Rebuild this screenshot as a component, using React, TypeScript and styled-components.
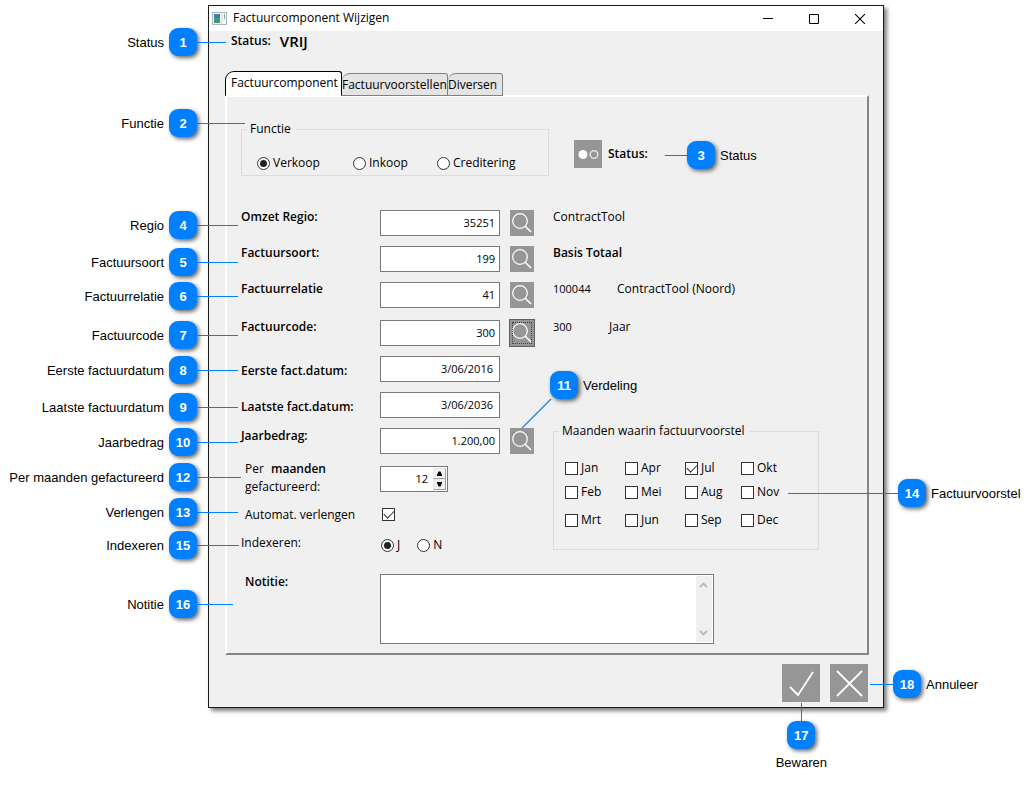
import React, { useState } from "react";
import styled, { createGlobalStyle, css } from "styled-components";

const BLUE = "#0080ff";
const FACE = "#f0f0f0";
const UI_FONT = '"Open Sans", "Noto Sans", sans-serif';

const GlobalStyle = createGlobalStyle`
  * { box-sizing: border-box; }
  body {
    margin: 0;
    background: #fff;
    color: #000;
    font: 12px/16px ${UI_FONT};
  }
  button, input, textarea { font: inherit; color: inherit; margin: 0; }
`;

const Stage = styled.main`
  padding: 5px 151px 78px 208px;
`;

const Frame = styled.section`
  position: relative;
  min-width: 640px;
  background: ${FACE};
  border: 1px solid #1a1a1a;
  box-shadow: 3px 3px 4px rgba(0, 0, 0, 0.5);
`;

/* Title bar */

const TitleBar = styled.header`
  display: flex;
  align-items: center;
  height: 25px;
  padding-left: 3px;
  background: #fff;
`;

const Title = styled.h1`
  flex: 1;
  margin: 0 0 0 6px;
  padding-bottom: 2px;
  font-size: 12px;
  line-height: 16px;
  font-weight: 400;
`;

const CaptionButton = styled.button`
  display: flex;
  align-items: center;
  justify-content: center;
  width: 46px;
  height: 25px;
  padding: 0;
  border: 0;
  background: none;
`;

/* Client area */

const Body = styled.div`
  padding: 0 14px 5px 16px;
`;

const StatusLine = styled.div`
  display: flex;
  align-items: center;
  gap: 9px;
  height: 20px;
  padding-left: 6px;
  font-weight: 600;
`;

const StatusValue = styled.strong`
  font-size: 15px;
  line-height: 20px;
  font-weight: 600;
`;

const Tabs = styled.div`
  display: flex;
  align-items: flex-end;
  height: 25px;
  margin-top: 20px;
`;

const Tab = styled.button<{ $active: boolean; $width: number }>`
  width: ${(p) => p.$width}px;
  height: 23px;
  padding: 0;
  border: 1px solid #808080;
  border-left-width: 0;
  border-radius: 8px 3px 0 0;
  background: #e4e4e4;
  text-align: left;
  white-space: nowrap;
  & + &:last-child { padding-left: 2px; }
  ${(p) =>
    p.$active &&
    css`
      height: 25px;
      padding: 0 0 2px 5px;
      border: 1px solid #000;
      border-bottom-color: #fff;
      border-radius: 9px 3px 0 0;
      background: #fff;
    `}
`;

const Panel = styled.div`
  padding: 24px 14px 9px;
  margin-top: -1px;
  border: 2px solid;
  border-color: #fff #868686 #868686 #fff;
`;

const TopSection = styled.div`
  display: flex;
  align-items: flex-start;
  gap: 25px;
  margin-bottom: 33px;
`;

const Group = styled.fieldset`
  margin: 0;
  min-width: 0;
  border: 1px solid #dcdcdc;
  padding: 0 11px;
  flex: none;
`;

const FunctionGroup = styled(Group)`
  width: 308px;
  height: 55px;
  padding: 18px 15px 0;
`;

const MonthGroup = styled(Group)`
  width: 266px;
  height: 127px;
  margin-top: 67px;
  padding: 21px 11px 0;
`;

const Legend = styled.legend<{ $pull?: boolean }>`
  padding: 0 5px 0 3px;
  margin-left: ${(p) => (p.$pull ? "-10px" : "-6px")};
`;

const Choice = styled.label`
  display: flex;
  align-items: center;
  gap: 3px;
  height: 16px;
`;

const ChoiceRow = styled.div<{ $columns: string }>`
  display: grid;
  grid-template-columns: ${(p) => p.$columns};
`;

const Radio = styled.input.attrs({ type: "radio" })`
  appearance: none;
  flex: none;
  display: grid;
  place-items: center;
  width: 13px;
  height: 13px;
  border: 1px solid #333;
  border-radius: 50%;
  background: #fff;
  &:checked::before {
    content: "";
    width: 7px;
    height: 7px;
    border-radius: 50%;
    background: #222;
  }
`;

const Check = styled.input.attrs({ type: "checkbox" })`
  appearance: none;
  flex: none;
  display: block;
  width: 13px;
  height: 13px;
  border: 1px solid #333;
  background: #fff;
  &:checked::before {
    content: "";
    display: block;
    width: 9px;
    height: 5px;
    margin: 1px 0 0 1px;
    border: solid #333;
    border-width: 0 0 1px 1px;
    transform: rotate(-45deg);
  }
`;

const MonthGrid = styled.div`
  display: grid;
  grid-template-columns: 60px 60px 56px 56px;
  grid-template-rows: 24px 28px 16px;
`;

const StatusPicker = styled.div`
  display: flex;
  align-items: center;
  gap: 6px;
  margin-top: 19px;
  font-weight: 600;
`;

const IconButton = styled.button<{ $w: number; $h: number; $focus?: boolean }>`
  display: flex;
  align-items: center;
  justify-content: center;
  flex: none;
  width: ${(p) => p.$w}px;
  height: ${(p) => p.$h}px;
  padding: 0;
  border: 0;
  background: #969696;
  ${(p) =>
    p.$focus &&
    css`
      outline: 1px solid #606060;
    `}
`;

/* Form rows */

const Row = styled.div<{ $gap?: number }>`
  display: flex;
  align-items: flex-start;
  min-height: 26px;
  margin-bottom: ${(p) => p.$gap ?? 10}px;
`;

/* Rows whose captions stand a pixel above their field */
const Fields = styled.div`
  & input, & button { margin-top: 1px; }
`;

const Label = styled.label<{ $bold?: boolean; $indent?: boolean; $low?: boolean }>`
  flex: none;
  width: 139px;
  padding-left: ${(p) => (p.$indent ? 4 : 0)}px;
  padding-top: ${(p) => (p.$low ? 7 : 0)}px;
  font-weight: ${(p) => (p.$bold ? 600 : 400)};
  white-space: nowrap;
`;

const Field = styled.input<{ $date?: boolean }>`
  width: 120px;
  height: 26px;
  padding: 0 ${(p) => (p.$date ? 6 : 4)}px 2px 4px;
  margin-right: 10px;
  border: 1px solid #7a7a7a;
  border-radius: 0;
  background: #fff;
  font-size: 11px;
  text-align: right;
`;

const Info = styled.output<{ $bold?: boolean }>`
  margin-left: 19px;
  font-weight: ${(p) => (p.$bold ? 600 : 400)};
  white-space: nowrap;
`;

const InfoCode = styled.span<{ $width: number }>`
  display: inline-block;
  width: ${(p) => p.$width}px;
  font-size: 11px;
`;

const Lower = styled.div`
  display: flex;
  align-items: flex-start;
`;

const LowerForm = styled.div`
  flex: none;
  width: 312px;
`;

const SpinRow = styled.div`
  display: flex;
  height: 38px;
  margin: -4px 0 9px;
`;

const SpinLabel = styled(Label)`
  line-height: 18px;
  b { margin-left: 4px; font-weight: 600; }
`;

const Spinner = styled.div`
  display: flex;
  align-self: center;
  width: 68px;
  height: 26px;
  padding: 1px;
  border: 1px solid #7a7a7a;
  background: #fff;
`;

const SpinInput = styled.input`
  flex: 1;
  min-width: 0;
  padding: 0 5px 0 0;
  border: 0;
  background: none;
  font-size: 11px;
  text-align: right;
`;

const SpinButtons = styled.div`
  display: flex;
  flex-direction: column;
  width: 13px;
`;

const SpinButton = styled.button`
  display: flex;
  align-items: center;
  justify-content: center;
  flex: 1;
  padding: 0;
  border: 1px solid;
  border-color: #e8e8e8 #a0a0a0 #a0a0a0 #e8e8e8;
  background: ${FACE};
`;

const ShortRow = styled.div<{ $height: number; $gap: number }>`
  display: flex;
  align-items: flex-start;
  height: ${(p) => p.$height}px;
  margin-bottom: ${(p) => p.$gap}px;
`;

const CheckCell = styled.div`
  padding: 1px 2px;
`;

const IndexChoices = styled.div`
  display: flex;
  align-self: flex-end;
  gap: 17px;
  padding-left: 1px;
`;

const NoteBox = styled.div`
  display: flex;
  width: 334px;
  height: 70px;
  padding: 1px;
  border: 1px solid #7a7a7a;
  background: #fff;
`;

const NoteText = styled.textarea`
  flex: 1;
  padding: 2px 4px;
  border: 0;
  resize: none;
  overflow: hidden;
  background: #fff;
`;

const NoteScroll = styled.div`
  display: flex;
  flex-direction: column;
  align-items: center;
  justify-content: space-between;
  width: 16px;
  padding: 6px 2px 6px 0;
  background: ${FACE};
`;

const Footer = styled.footer`
  display: flex;
  justify-content: flex-end;
  gap: 10px;
  padding: 9px 1px 0 0;
`;

/* Numbered callouts that lie over the window */

type Place = { $top: number; $left?: string; $right?: string };

const CalloutBox = styled.div<Place & { $vertical?: boolean }>`
  position: absolute;
  top: ${(p) => p.$top}px;
  left: ${(p) => p.$left ?? "auto"};
  right: ${(p) => p.$right ?? "auto"};
  display: flex;
  flex-direction: ${(p) => (p.$vertical ? "column" : "row")};
  align-items: center;
  font: 13px/16px "Liberation Sans", Arial, sans-serif;
  white-space: nowrap;
  pointer-events: none;
`;

const Badge = styled.span`
  display: flex;
  align-items: center;
  justify-content: center;
  flex: none;
  width: 28px;
  height: 28px;
  padding-top: 1px;
  border-radius: 9px;
  background: ${BLUE};
  color: #fff;
  font-weight: 700;
  box-shadow: 2px 2px 4px rgba(0, 0, 0, 0.6);
`;

const Lead = styled.span<{ $length?: number }>`
  flex: ${(p) => (p.$length ? "none" : "1")};
  width: ${(p) => (p.$length ? `${p.$length}px` : "auto")};
  height: 1px;
  background: ${BLUE};
`;

const VerticalLead = styled.span`
  width: 1px;
  height: 18px;
  background: ${BLUE};
`;

const Caption = styled.span<{ $width?: number }>`
  margin: 0 5px;
  padding-top: 2px;
  min-width: ${(p) => (p.$width ? `${p.$width}px` : "0")};
`;

const BottomCaption = styled.span`
  margin-top: 6px;
`;

const DiagonalLead = styled.svg`
  position: absolute;
  top: 393px;
  left: 313px;
`;

const SearchIcon = () => (
  <svg width="24" height="26" viewBox="0 0 24 26" fill="none" stroke="#fff" aria-hidden="true">
    <circle cx="10" cy="11" r="7.3" strokeWidth="1.2" />
    <path d="M15.2 16.2L21 22" strokeWidth="1.6" />
  </svg>
);

const FocusMark = styled.svg`
  outline: 1px dotted #444;
  outline-offset: -3px;
`;

const FocusedSearchIcon = () => (
  <FocusMark width="24" height="26" viewBox="0 0 24 26" fill="none" stroke="#fff" aria-hidden="true">
    <circle cx="10" cy="11" r="7.3" strokeWidth="1.2" />
    <path d="M15.2 16.2L21 22" strokeWidth="1.6" />
  </FocusMark>
);

const Arrow = ({ down }: { down?: boolean }) => (
  <svg width="7" height="5" viewBox="0 0 7 5" aria-hidden="true">
    <path d={down ? "M1 0h5v1L4.500 4.500h-2L1 1z" : "M1 5h5V4L4.500 .5h-2L1 4z"} fill="#000" />
  </svg>
);

const Chevron = ({ down }: { down?: boolean }) => (
  <svg width="9" height="6" viewBox="0 0 9 6" fill="none" stroke="#b8b8b8" strokeWidth="1.8" aria-hidden="true">
    <path d={down ? "M1 1l3.500 3.500L8 1" : "M1 5l3.500-3.500L8 5"} />
  </svg>
);

const tabs = [
  { name: "Factuurcomponent", width: 117 },
  { name: "Factuurvoorstellen", width: 106 },
  { name: "Diversen", width: 55 },
];

const months = ["Jan", "Apr", "Jul", "Okt", "Feb", "Mei", "Aug", "Nov", "Mrt", "Jun", "Sep", "Dec"];

const lookups = [
  { id: "regio", label: "Omzet Regio:", value: "35251", gap: 9, name: "ContractTool" },
  { id: "soort", label: "Factuursoort:", value: "199", gap: 9, name: "Basis Totaal", bold: true },
  { id: "relatie", label: "Factuurrelatie", value: "41", gap: 11, code: "100044", codeWidth: 64, name: "ContractTool (Noord)" },
  { id: "code", label: "Factuurcode:", value: "300", gap: 10, code: "300", codeWidth: 56, name: "Jaar", focus: true },
];

/* y is the height of the lead line in the window, end where it stops */
const leftCallouts = [
  { n: 1, text: "Status", y: 36, end: 17 },
  { n: 2, text: "Functie", y: 117, end: 36 },
  { n: 4, text: "Regio", y: 219, end: 29 },
  { n: 5, text: "Factuursoort", y: 256, end: 29 },
  { n: 6, text: "Factuurrelatie", y: 290, end: 29 },
  { n: 7, text: "Factuurcode", y: 329, end: 29 },
  { n: 8, text: "Eerste factuurdatum", y: 364, end: 29 },
  { n: 9, text: "Laatste factuurdatum", y: 401, end: 29 },
  { n: 10, text: "Jaarbedrag", y: 436, end: 29 },
  { n: 12, text: "Per maanden gefactureerd", y: 471, end: 32 },
  { n: 13, text: "Verlengen", y: 506, end: 29 },
  { n: 15, text: "Indexeren", y: 539, end: 30 },
  { n: 16, text: "Notitie", y: 598, end: 24 },
];

const Callouts = () => (
  <>
    {leftCallouts.map((c) => (
      <CalloutBox key={c.n} $top={c.y - 14} $right={`calc(100% - ${c.end}px)`}>
        <Caption>{c.text}</Caption>
        <Badge>{c.n}</Badge>
        <Lead $length={c.end + 12} />
      </CalloutBox>
    ))}
    <CalloutBox $top={135} $left="456px">
      <Lead $length={22} />
      <Badge>3</Badge>
      <Caption>Status</Caption>
    </CalloutBox>
    <DiagonalLead width="30" height="30" viewBox="0 0 30 30" aria-hidden="true">
      <path d="M0 29L29 0" stroke={BLUE} strokeWidth="1.2" />
    </DiagonalLead>
    <CalloutBox $top={365} $left="341px">
      <Badge>11</Badge>
      <Caption>Verdeling</Caption>
    </CalloutBox>
    <CalloutBox $top={473} $left="579px" $right="-143px">
      <Lead />
      <Badge>14</Badge>
      <Caption $width={90}>Factuurvoorstel</Caption>
    </CalloutBox>
    <CalloutBox $top={664} $left="calc(100% - 13px)">
      <Lead $length={23} />
      <Badge>18</Badge>
      <Caption>Annuleer</Caption>
    </CalloutBox>
    <CalloutBox $top={697} $right="56px" $vertical>
      <VerticalLead />
      <Badge>17</Badge>
      <BottomCaption>Bewaren</BottomCaption>
    </CalloutBox>
  </>
);

export default function App() {
  const [tab, setTab] = useState(0);
  const [count, setCount] = useState(12);

  return (
    <>
      <GlobalStyle />
      <Stage>
        <Frame>
          <TitleBar>
            <svg width="15" height="13" viewBox="0 0 15 13" aria-hidden="true">
              <rect x=".5" y=".5" width="14" height="12" fill="#f4f6f8" stroke="#a9b4bf" />
              <rect x="2" y="2" width="6" height="9" fill="#3d7fae" />
              <rect x="2" y="6" width="6" height="5" fill="#3f9a78" />
              <rect x="9" y="2" width="2" height="9" fill="#dfe4e8" />
              <rect x="12" y="2" width="1" height="5" fill="#7fb3a0" />
            </svg>
            <Title>Factuurcomponent Wijzigen</Title>
            <CaptionButton aria-label="Minimaliseren">
              <svg width="10" height="10" viewBox="0 0 10 10"><path d="M0 4.500h10" stroke="#000" /></svg>
            </CaptionButton>
            <CaptionButton aria-label="Maximaliseren">
              <svg width="10" height="10" viewBox="0 0 10 10"><path d="M.5 .5h9v9h-9z" fill="none" stroke="#000" /></svg>
            </CaptionButton>
            <CaptionButton aria-label="Sluiten">
              <svg width="10" height="10" viewBox="0 0 10 10"><path d="M0 0l10 10M10 0L0 10" stroke="#000" strokeWidth="1.1" /></svg>
            </CaptionButton>
          </TitleBar>

          <Body>
            <StatusLine>
              <span>Status:</span>
              <StatusValue>VRIJ</StatusValue>
            </StatusLine>

            <Tabs role="tablist">
              {tabs.map((t, i) => (
                <Tab
                  key={t.name}
                  type="button"
                  role="tab"
                  aria-selected={tab === i}
                  $active={tab === i}
                  $width={t.width}
                  onClick={() => setTab(i)}
                >
                  {t.name}
                </Tab>
              ))}
            </Tabs>

            <Panel role="tabpanel">
              <TopSection>
                <FunctionGroup>
                  <Legend $pull>Functie</Legend>
                  <ChoiceRow $columns="96px 84px auto">
                    <Choice><Radio name="functie" defaultChecked />Verkoop</Choice>
                    <Choice><Radio name="functie" />Inkoop</Choice>
                    <Choice><Radio name="functie" />Creditering</Choice>
                  </ChoiceRow>
                </FunctionGroup>
                <StatusPicker>
                  <IconButton $w={28} $h={28} aria-label="Status wijzigen">
                    <svg width="28" height="28" viewBox="0 0 28 28" aria-hidden="true">
                      <circle cx="9" cy="14.500" r="4.500" fill="#fff" />
                      <circle cx="20" cy="14.500" r="3.800" fill="none" stroke="#e4e4e4" strokeWidth="1.400" />
                    </svg>
                  </IconButton>
                  <span>Status:</span>
                </StatusPicker>
              </TopSection>

              <Fields>
                {lookups.map((f) => (
                  <Row key={f.id} $gap={f.gap}>
                    <Label htmlFor={f.id} $bold>{f.label}</Label>
                    <Field id={f.id} defaultValue={f.value} />
                    <IconButton $w={24} $h={26} $focus={f.focus} aria-label="Zoeken">
                      {f.focus ? <FocusedSearchIcon /> : <SearchIcon />}
                    </IconButton>
                    <Info $bold={f.bold} htmlFor={f.id}>
                      {f.code && <InfoCode $width={f.codeWidth!}>{f.code}</InfoCode>}
                      {f.name}
                    </Info>
                  </Row>
                ))}
              </Fields>

              <Lower>
                <LowerForm>
                  <Row>
                    <Label htmlFor="eerste" $bold $low>Eerste fact.datum:</Label>
                    <Field id="eerste" $date defaultValue="3/06/2016" />
                  </Row>
                  <Row>
                    <Label htmlFor="laatste" $bold $low>Laatste fact.datum:</Label>
                    <Field id="laatste" $date defaultValue="3/06/2036" />
                  </Row>
                  <Row>
                    <Label htmlFor="bedrag" $bold>Jaarbedrag:</Label>
                    <Field id="bedrag" defaultValue="1.200,00" />
                    <IconButton $w={24} $h={26} aria-label="Verdeling"><SearchIcon /></IconButton>
                  </Row>
                  <SpinRow>
                    <SpinLabel htmlFor="maanden" $indent>
                      Per <b>maanden</b>
                      <br />
                      gefactureerd:
                    </SpinLabel>
                    <Spinner>
                      <SpinInput
                        id="maanden"
                        value={count}
                        onChange={(e) => setCount(Number(e.target.value) || 0)}
                      />
                      <SpinButtons>
                        <SpinButton type="button" aria-label="Meer" onClick={() => setCount(count + 1)}><Arrow /></SpinButton>
                        <SpinButton type="button" aria-label="Minder" onClick={() => setCount(count - 1)}><Arrow down /></SpinButton>
                      </SpinButtons>
                    </Spinner>
                  </SpinRow>
                  <ShortRow $height={16} $gap={12}>
                    <Label htmlFor="verlengen" $indent>Automat. verlengen</Label>
                    <CheckCell><Check id="verlengen" defaultChecked /></CheckCell>
                  </ShortRow>
                  <ShortRow $height={18} $gap={21}>
                    <Label as="span">Indexeren:</Label>
                    <IndexChoices role="radiogroup" aria-label="Indexeren">
                      <Choice><Radio name="index" defaultChecked />J</Choice>
                      <Choice><Radio name="index" />N</Choice>
                    </IndexChoices>
                  </ShortRow>
                </LowerForm>

                <MonthGroup>
                  <Legend>Maanden waarin factuurvoorstel</Legend>
                  <MonthGrid>
                    {months.map((m) => (
                      <Choice key={m}><Check defaultChecked={m === "Jul"} />{m}</Choice>
                    ))}
                  </MonthGrid>
                </MonthGroup>
              </Lower>

              <Row $gap={0}>
                <Label htmlFor="notitie" $bold $indent>Notitie:</Label>
                <NoteBox>
                  <NoteText id="notitie" />
                  <NoteScroll><Chevron /><Chevron down /></NoteScroll>
                </NoteBox>
              </Row>
            </Panel>

            <Footer>
              <IconButton $w={38} $h={38} aria-label="Bewaren">
                <svg width="38" height="38" viewBox="0 0 38 38" fill="none" stroke="#fff" strokeWidth="1.800" aria-hidden="true">
                  <path d="M8 23l8 8L31 8" />
                </svg>
              </IconButton>
              <IconButton $w={38} $h={38} aria-label="Annuleer">
                <svg width="38" height="38" viewBox="0 0 38 38" fill="none" stroke="#fff" strokeWidth="1.800" aria-hidden="true">
                  <path d="M7 7l25 25M32 7L7 32" />
                </svg>
              </IconButton>
            </Footer>
          </Body>
          <Callouts />
        </Frame>
      </Stage>
    </>
  );
}
